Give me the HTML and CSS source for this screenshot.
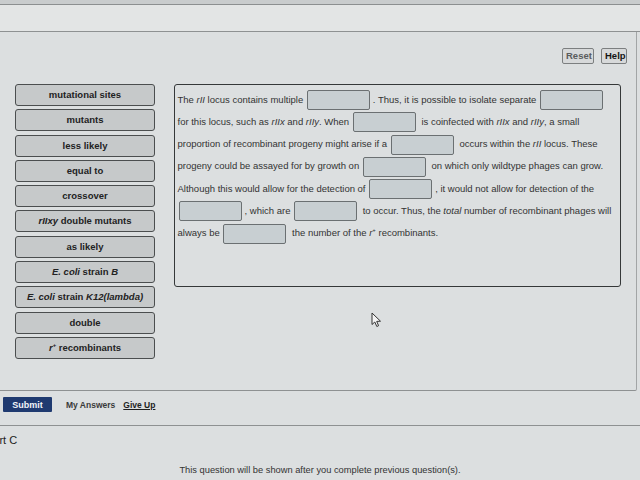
FILE: index.html
```html
<!DOCTYPE html>
<html>
<head>
<meta charset="utf-8">
<link rel="stylesheet" href="styles.css">
</head>
<body>
<div class="topbar"></div>
<div class="band"></div>
<div class="question">
  <div class="toolbar">
    <button class="tool reset">Reset</button>
    <button class="tool help">Help</button>
  </div>
  <div class="workarea">
    <div class="choices">
      <div class="choice">mutational sites</div>
      <div class="choice">mutants</div>
      <div class="choice">less likely</div>
      <div class="choice">equal to</div>
      <div class="choice">crossover</div>
      <div class="choice"><i>rIIxy</i> double mutants</div>
      <div class="choice">as likely</div>
      <div class="choice"><i>E. coli</i> strain <i>B</i></div>
      <div class="choice"><i>E. coli</i> strain <i>K12(lambda)</i></div>
      <div class="choice">double</div>
      <div class="choice"><i>r</i><sup>+</sup> recombinants</div>
    </div>
    <div class="passage">
      <div class="line">The <i>rII</i> locus contains multiple <span class="blank"></span>. Thus, it is possible to isolate separate <span class="blank"></span></div>
      <div class="line">for this locus, such as <i>rIIx</i> and <i>rIIy</i>. When <span class="blank"></span> is coinfected with <i>rIIx</i> and <i>rIIy</i>, a small</div>
      <div class="line">proportion of recombinant progeny might arise if a <span class="blank"></span> occurs within the <i>rII</i> locus. These</div>
      <div class="line">progeny could be assayed for by growth on <span class="blank"></span> on which only wildtype phages can grow.</div>
      <div class="line">Although this would allow for the detection of <span class="blank"></span>, it would not allow for detection of the</div>
      <div class="line"><span class="blank"></span>, which are <span class="blank"></span> to occur. Thus, the <i>total</i> number of recombinant phages will</div>
      <div class="line">always be <span class="blank"></span> the number of the <i>r</i><sup>+</sup> recombinants.</div>
    </div>
  </div>
</div>
<div class="actions">
  <button class="submit">Submit</button>
  <span class="link">My Answers</span>
  <span class="link giveup">Give Up</span>
</div>
<div class="divider"></div>
<div class="part">Part C</div>
<div class="notice">This question will be shown after you complete previous question(s).</div>
<svg class="cursor" width="12" height="16" viewBox="0 0 12 16">
  <path d="M1 1 L1 12.5 L3.8 10 L5.8 14.5 L7.6 13.7 L5.7 9.4 L9.5 9.2 Z" fill="#f4f4f4" stroke="#333" stroke-width="1" stroke-linejoin="round"/>
</svg>
</body>
</html>
```
FILE: styles.css
```css
html, body {
  margin: 0;
  padding: 0;
}
body {
  width: 640px;
  height: 480px;
  overflow: hidden;
  position: relative;
  background: #dcdfe0;
  font-family: "Liberation Sans", Arial, sans-serif;
  color: #333;
}
.topbar {
  height: 4px;
  background: #c9cccd;
  border-bottom: 1px solid #8c8f90;
}
.band {
  height: 26px;
  background: #e3e5e5;
  border-bottom: 1px solid #8e9192;
}
.question {
  box-sizing: border-box;
  width: 637px;
  height: 359px;
  border-right: 1px solid #a2a5a6;
  border-bottom: 1px solid #8e9192;
  border-bottom-right-radius: 2px;
}
.toolbar {
  display: flex;
  justify-content: flex-end;
  gap: 7px;
  padding: 16px 9px 0 0;
}
.tool {
  box-sizing: border-box;
  height: 16px;
  padding: 0 3px;
  margin: 0;
  border: 1px solid #7c7f80;
  border-radius: 2px;
  background: #d7d9da;
  font-family: "Liberation Sans", Arial, sans-serif;
  font-size: 9.5px;
  font-weight: bold;
  line-height: 14px;
}
.reset { color: #5a5c5d; width: 32px; }
.help { color: #151515; width: 26px; }
.workarea {
  display: flex;
  margin-top: 20px;
}
.choices {
  display: flex;
  flex-direction: column;
  gap: 3.3px;
  width: 140px;
  margin-left: 15px;
}
.choice {
  box-sizing: border-box;
  height: 22px;
  border: 1.5px solid #4b4e4f;
  border-radius: 3px;
  background: #c6c9ca;
  color: #222;
  font-size: 9.5px;
  font-weight: bold;
  text-align: center;
  line-height: 19px;
  white-space: nowrap;
}
.choice sup, .line sup {
  font-size: 6px;
  vertical-align: 4px;
  line-height: 0;
}
.passage {
  box-sizing: border-box;
  width: 447px;
  height: 203px;
  margin-left: 19px;
  border: 1.5px solid #353839;
  border-radius: 3px;
  padding: 3.5px 2px 0 2.5px;
  font-size: 9.5px;
  color: #333;
}
.line {
  height: 22.3px;
  line-height: 22.3px;
  white-space: nowrap;
}
.blank {
  display: inline-block;
  box-sizing: border-box;
  width: 63px;
  height: 20px;
  margin: 0 3px 0 1px;
  border: 1.5px solid #6b7072;
  border-radius: 2px;
  background: #c8cfd2;
  vertical-align: middle;
}
.actions {
  display: flex;
  align-items: center;
  margin-top: 6px;
  padding-left: 3px;
  height: 15px;
}
.submit {
  box-sizing: border-box;
  width: 49px;
  height: 15px;
  margin: 0 14px 0 0;
  padding: 0;
  border: none;
  border-radius: 1px;
  background: #1f3a70;
  color: #f2f4f8;
  font-family: "Liberation Sans", Arial, sans-serif;
  font-size: 9px;
  font-weight: bold;
}
.link {
  font-size: 8.5px;
  font-weight: bold;
  color: #3a3a3a;
  margin-right: 8px;
}
.giveup {
  color: #1e1e1e;
  text-decoration: underline;
}
.divider {
  margin-top: 13px;
  height: 0;
  border-top: 1px solid #8e9192;
}
.part {
  margin-top: 7px;
  margin-left: -14px;
  font-size: 11px;
  line-height: 14px;
  color: #222;
}
.notice {
  margin-top: 17px;
  font-size: 9.3px;
  line-height: 12px;
  text-align: center;
  padding-right: 0;
  color: #333;
}
.cursor {
  position: absolute;
  left: 371px;
  top: 312px;
}
```
